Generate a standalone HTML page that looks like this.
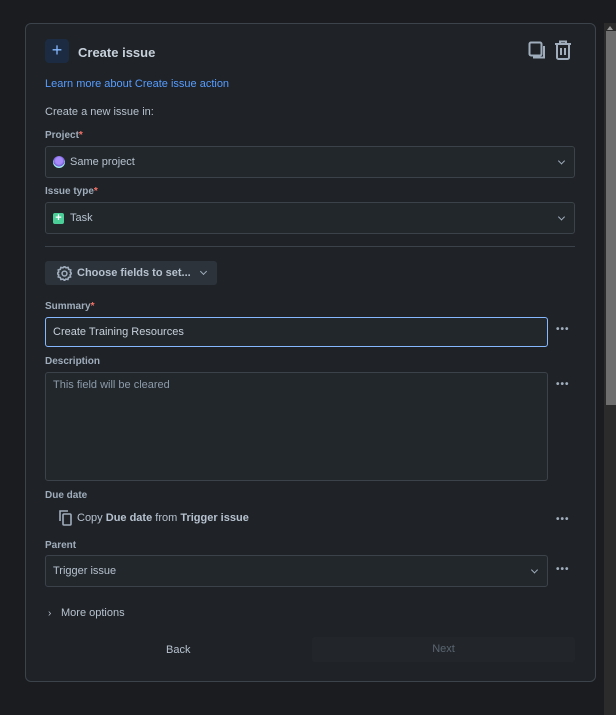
<!DOCTYPE html>
<html><head><style>
*{box-sizing:border-box;margin:0;padding:0}
body{width:616px;height:715px;background:#1a1c1f;font-family:"Liberation Sans",sans-serif;font-size:12px;color:#b6c2cf;position:relative;overflow:hidden}
.card{position:absolute;left:25px;top:23px;width:571px;height:659px;background:#1f2226;border:1px solid #3d434b;border-radius:6px}
.abs{position:absolute}
.lbl{position:absolute;left:20px;font-size:10px;font-weight:bold;color:#9fadbc}
.lbl b{color:#f87168}
.inp{position:absolute;left:20px;background:#22272b;border:1px solid #3b4249;border-radius:3px;color:#b6c2cf;font-size:11px;padding-left:7px;display:flex;align-items:center}
.chev{position:absolute;right:10px;top:50%;width:5px;height:5px;border-right:1.3px solid #9fadbc;border-bottom:1.3px solid #9fadbc;transform:translateY(-70%) rotate(45deg)}
.dots{position:absolute;left:530px;font-size:10px;color:#9fadbc;letter-spacing:1px;font-weight:bold}
.sb{position:absolute;left:604px;top:23px;width:12px;height:692px;background:#2b2b2b}
.th{position:absolute;left:606px;top:31px;width:10px;height:374px;background:#6e6e6e}
</style></head><body>
<div class="sb"></div><div class="th"></div>
<div class="abs" style="left:607px;top:26px;width:0;height:0;border-left:3px solid transparent;border-right:3px solid transparent;border-bottom:4px solid #999"></div>
<div class="card">
 <div class="abs" style="left:19px;top:15px;width:24px;height:24px;background:#1c2b41;border-radius:4px;color:#85b8ff;font-size:18px;line-height:22px;text-align:center">+</div>
 <div class="abs" style="left:52px;top:21px;font-size:13px;font-weight:bold;color:#c7d1db">Create issue</div>
 <svg class="abs" style="left:502px;top:17px" width="18" height="20" viewBox="0 0 18 20"><rect x="1.5" y="1.5" width="12" height="13" rx="1.5" fill="none" stroke="#9fadbc" stroke-width="2"/><path d="M16 5v11.5H5" fill="none" stroke="#9fadbc" stroke-width="2"/></svg>
 <svg class="abs" style="left:528px;top:16px" width="18" height="20" viewBox="0 0 18 20"><path d="M1 4h16M6 4V1.5h6V4M3 4v13.5a1.5 1.5 0 0 0 1.5 1.5h9a1.5 1.5 0 0 0 1.5-1.5V4M7 8v7M11 8v7" fill="none" stroke="#9fadbc" stroke-width="2"/></svg>
 <div class="abs" style="left:19px;top:54px;font-size:11px;color:#579dff">Learn more about Create issue action</div>
 <div class="abs" style="left:19px;top:82px;font-size:11px;color:#b6c2cf">Create a new issue in:</div>
 <div class="lbl" style="top:106px;left:19px">Project<b>*</b></div>
 <div class="inp" style="top:122px;width:530px;height:32px;left:19px"><span style="display:inline-block;width:12px;height:12px;border-radius:50%;background:radial-gradient(circle at 50% 40%,#a78bfa 35%,#6d5bd0 60%,#9fe6f0 61%);margin-right:5px"></span>Same project<div class="chev"></div></div>
 <div class="lbl" style="top:162px;left:19px">Issue type<b>*</b></div>
 <div class="inp" style="top:178px;width:530px;height:32px;left:19px"><span style="display:inline-block;width:11px;height:11px;border-radius:2px;background:#4bce97;color:#fff;font-size:11px;line-height:10px;text-align:center;font-weight:bold;margin-right:6px">+</span>Task<div class="chev"></div></div>
 <div class="abs" style="left:19px;top:222px;width:530px;height:1px;background:#3b4249"></div>
 <div class="abs" style="left:19px;top:237px;width:172px;height:24px;background:#2c333a;border-radius:3px;font-size:11px;font-weight:bold;color:#b6c2cf;display:flex;align-items:center;padding-left:12px">
  <svg width="15" height="15" viewBox="0 0 16 16" style="margin-right:5px"><path d="M8 1l1.6 1.5 2.2-.4.7 2.1 2.1.7-.4 2.2L15.5 8.7 14 10.3l.4 2.2-2.1.7-.7 2.1-2.2-.4L8 16.4 6.4 14.9l-2.2.4-.7-2.1-2.1-.7.4-2.2L.3 8.7 1.8 7.1l-.4-2.2 2.1-.7.7-2.1 2.2.4z" transform="translate(0,-.5) scale(1,.97)" fill="none" stroke="#9fadbc" stroke-width="1.8"/><circle cx="8" cy="8" r="2.6" fill="none" stroke="#9fadbc" stroke-width="1.6"/></svg>
  Choose fields to set...<div style="position:relative;width:5px;height:5px;margin-left:10px;border-right:1.3px solid #9fadbc;border-bottom:1.3px solid #9fadbc;transform:translateY(-2px) rotate(45deg)"></div></div>
 <div class="lbl" style="top:277px;left:19px">Summary<b>*</b></div>
 <div class="inp" style="top:293px;width:503px;height:30px;left:19px;border-color:#85b8ff;color:#c7d1db">Create Training Resources</div>
 <div class="dots" style="top:300px">•••</div>
 <div class="lbl" style="top:332px;left:19px">Description</div>
 <div class="inp" style="top:348px;width:503px;height:109px;left:19px;align-items:flex-start;padding-top:6px;color:#8c9bab">This field will be cleared</div>
 <div class="dots" style="top:355px">•••</div>
 <div class="lbl" style="top:466px;left:19px">Due date</div>
 <svg class="abs" style="left:33px;top:486px" width="13" height="16" viewBox="0 0 13 16"><path d="M1 11V1h8" fill="none" stroke="#9fadbc" stroke-width="1.6"/><rect x="4" y="4" width="8" height="11" rx="1" fill="none" stroke="#9fadbc" stroke-width="1.6"/></svg>
 <div class="abs" style="left:51px;top:488px;font-size:11px;color:#b6c2cf">Copy <b>Due date</b> from <b>Trigger issue</b></div>
 <div class="dots" style="top:490px">•••</div>
 <div class="lbl" style="top:516px;left:19px">Parent</div>
 <div class="inp" style="top:531px;width:503px;height:32px;left:19px">Trigger issue<div class="chev"></div></div>
 <div class="dots" style="top:540px">•••</div>
 <div class="abs" style="left:22px;top:584px;font-size:10px;color:#b6c2cf">›</div>
 <div class="abs" style="left:35px;top:583px;font-size:11px;color:#b6c2cf">More options</div>
 <div class="abs" style="left:140px;top:620px;font-size:11px;color:#b6c2cf">Back</div>
 <div class="abs" style="left:286px;top:613px;width:263px;height:25px;background:#22262a;border-radius:3px;font-size:11px;color:#5a6570;text-align:center;line-height:25px">Next</div>
</div>
</body></html>
